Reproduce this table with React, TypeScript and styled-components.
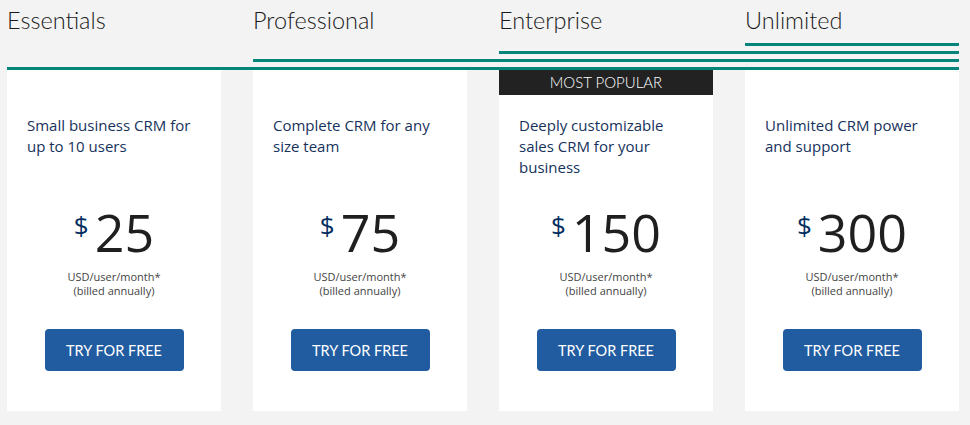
import React from "react";
import styled, { createGlobalStyle } from "styled-components";

const Global = createGlobalStyle`
  html, body { margin: 0; padding: 0; background: #f3f3f3; }
  body { font-family: "Open Sans", "Liberation Sans", sans-serif; }
`;

const Page = styled.div`
  width: 952px;
  padding: 0 0 0 7px;
`;

const Grid = styled.div`
  display: grid;
  grid-template-columns: repeat(4, 214px);
  column-gap: 32px;
`;

const TitleRow = styled(Grid)`
  height: 43px;
  padding-top: 5px;
  box-sizing: border-box;
`;

const Title = styled.h2`
  margin: 0;
  font-family: Lato, "Open Sans", sans-serif;
  font-weight: 300;
  font-size: 23.5px;
  line-height: 30px;
  color: #1a1a1a;
`;

const Lines = styled(Grid)`
  row-gap: 5px;
`;

const Rule = styled.div<{ $from: number }>`
  grid-column: ${(p) => p.$from} / -1;
  height: 3px;
  background: #04847a;
`;

const Cards = styled(Grid)``;

const Card = styled.div`
  background: #fff;
  display: flex;
  flex-direction: column;
  align-items: stretch;
  height: 341px;
  box-sizing: border-box;
`;

const Banner = styled.div<{ $show: boolean }>`
  height: 25px;
  background: ${(p) => (p.$show ? "#222222" : "transparent")};
  color: #fff;
  font-family: Lato, "Open Sans", sans-serif;
  font-weight: 300;
  font-size: 15px;
  line-height: 25px;
  text-align: center;
`;

const Body = styled.div`
  padding: 0 20px;
  display: flex;
  flex-direction: column;
  align-items: center;
`;

const Desc = styled.p`
  align-self: stretch;
  margin: 20px 0 0;
  height: 63px;
  font-family: "Open Sans", sans-serif;
  font-size: 15px;
  line-height: 21px;
  color: #16325c;
`;

const PriceRow = styled.div`
  margin-top: 28px;
  display: flex;
  align-items: flex-start;
  gap: 6px;
`;

const Dollar = styled.span`
  font-family: "Open Sans", sans-serif;
  font-size: 26px;
  line-height: 30px;
  margin-top: 4px;
  color: #032d60;
`;

const Amount = styled.span`
  font-family: "Open Sans", sans-serif;
  font-weight: 400;
  font-size: 52px;
  line-height: 52px;
  color: #1f1f1f;
`;

const Terms = styled.div`
  margin-top: 12px;
  font-family: "Open Sans", sans-serif;
  font-size: 11px;
  line-height: 14px;
  color: #444;
  text-align: center;
`;

const Button = styled.button`
  margin-top: 31px;
  width: 139px;
  height: 42px;
  border: none;
  border-radius: 4px;
  background: #215ca0;
  color: #fff;
  font-family: Lato, "Open Sans", sans-serif;
  font-size: 14.5px;
  font-weight: 400;
  text-transform: uppercase;
  cursor: pointer;
`;

const plans = [
  { name: "Essentials", desc: "Small business CRM for up to 10 users", price: "25" },
  { name: "Professional", desc: "Complete CRM for any size team", price: "75" },
  { name: "Enterprise", desc: "Deeply customizable sales CRM for your business", price: "150", popular: true },
  { name: "Unlimited", desc: "Unlimited CRM power and support", price: "300" },
];

export default function App() {
  return (
    <Page>
      <Global />
      <TitleRow>
        {plans.map((p) => (
          <Title key={p.name}>{p.name}</Title>
        ))}
      </TitleRow>
      <Lines>
        {[4, 3, 2, 1].map((n) => (
          <Rule key={n} $from={n} />
        ))}
      </Lines>
      <Cards>
        {plans.map((p) => (
          <Card key={p.name}>
            <Banner $show={!!p.popular}>{p.popular ? "MOST POPULAR" : ""}</Banner>
            <Body>
              <Desc>{p.desc}</Desc>
              <PriceRow>
                <Dollar>$</Dollar>
                <Amount>{p.price}</Amount>
              </PriceRow>
              <Terms>
                USD/user/month*
                <br />
                (billed annually)
              </Terms>
              <Button>Try for free</Button>
            </Body>
          </Card>
        ))}
      </Cards>
    </Page>
  );
}
